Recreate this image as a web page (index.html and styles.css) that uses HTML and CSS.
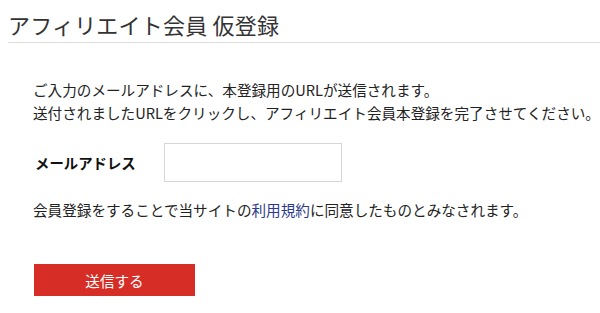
FILE: index.html
```html
<!DOCTYPE html>
<html lang="ja">
<head>
<meta charset="utf-8">
<link rel="stylesheet" href="styles.css">
</head>
<body>
<div class="page">
  <h1 class="title">アフィリエイト会員 仮登録</h1>
  <div class="content">
    <p class="intro">ご入力のメールアドレスに、本登録用のURLが送信されます。<br>送付されましたURLをクリックし、アフィリエイト会員本登録を完了させてください。</p>
    <div class="field">
      <label class="label">メールアドレス</label>
      <input class="input" type="text">
    </div>
    <p class="terms">会員登録をすることで当サイトの<a class="link" href="#">利用規約</a>に同意したものとみなされます。</p>
    <button class="submit" type="button">送信する</button>
  </div>
</div>
</body>
</html>
```
FILE: styles.css
```css
html, body {
  margin: 0;
  padding: 0;
  background: #fff;
}
body {
  font-family: "Noto Sans CJK JP", "Noto Sans", sans-serif;
  color: #222;
}
.page {
  padding: 0 0 0 8px;
}
.title {
  margin: 0;
  padding: 9px 0 0 0;
  height: 43px;
  box-sizing: border-box;
  font-size: 22px;
  font-weight: 400;
  line-height: 30px;
  color: #333;
  border-bottom: 1px solid #ddd;
  letter-spacing: 0.2px;
}
.content {
  padding: 0 0 0 25px;
}
.intro {
  margin: 35px 0 0 0;
  font-size: 14.6px;
  line-height: 23px;
}
.field {
  display: flex;
  align-items: center;
  margin-top: 19px;
}
.label {
  width: 131px;
  padding-left: 2px;
  box-sizing: border-box;
  font-size: 14.4px;
  font-weight: 700;
  color: #111;
}
.input {
  width: 178px;
  height: 39px;
  box-sizing: border-box;
  border: 1px solid #d6d6d6;
  margin: 0;
  padding: 0 8px;
}
.terms {
  margin: 16px 0 0 0;
  font-size: 14.6px;
  line-height: 23px;
}
.link {
  color: #2b3a8c;
  text-decoration: none;
}
.submit {
  display: block;
  margin: 43px 0 0 1px;
  width: 161px;
  height: 32px;
  border: none;
  background: #d62d27;
  color: #fff;
  font-family: "Noto Sans CJK JP", sans-serif;
  font-size: 14.6px;
  padding: 0;
}
```
